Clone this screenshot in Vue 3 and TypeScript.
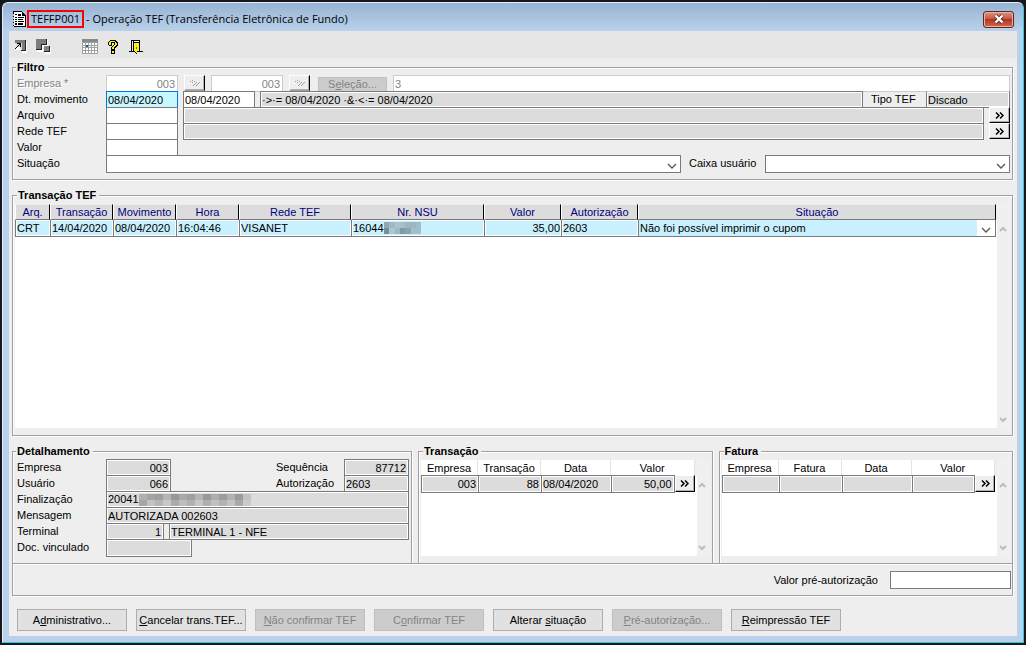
<script setup lang="ts">
import { ref } from 'vue'

interface Column {
  key: string
  label: string
}

interface Action {
  before: string
  mnemonic: string
  after: string
  disabled: boolean
}

const columns: Column[] = [
  { key: 'arq', label: 'Arq.' },
  { key: 'transacao', label: 'Transação' },
  { key: 'movimento', label: 'Movimento' },
  { key: 'hora', label: 'Hora' },
  { key: 'rede', label: 'Rede TEF' },
  { key: 'nsu', label: 'Nr. NSU' },
  { key: 'valor', label: 'Valor' },
  { key: 'autorizacao', label: 'Autorização' },
  { key: 'situacao', label: 'Situação' },
]

const miniTables = [
  {
    title: 'Transação',
    heads: ['Empresa', 'Transação', 'Data', 'Valor'],
    cells: ['003', '88', '08/04/2020', '50,00'],
  },
  {
    title: 'Fatura',
    heads: ['Empresa', 'Fatura', 'Data', 'Valor'],
    cells: ['', '', '', ''],
  },
]

const actions: Action[] = [
  { before: 'A', mnemonic: 'd', after: 'ministrativo...', disabled: false },
  { before: '', mnemonic: 'C', after: 'ancelar trans.TEF...', disabled: false },
  { before: '', mnemonic: 'N', after: 'ão confirmar TEF', disabled: true },
  { before: 'C', mnemonic: 'o', after: 'nfirmar TEF', disabled: true },
  { before: 'Alterar ', mnemonic: 's', after: 'ituação', disabled: false },
  { before: '', mnemonic: 'P', after: 'ré-autorização...', disabled: true },
  { before: '', mnemonic: 'R', after: 'eimpressão TEF', disabled: false },
]

const nsuMask = [
  ['#8fa9b3', '#9fbac4', '#a9c5cf', '#a5c0ca', '#9cb7c2', '#9ab7c3', '#a0bec9'],
  ['#75909a', '#a9c8d4', '#9ab9c5', '#819aa5', '#8aa5af', '#a3c1cc', '#a1bfca'],
]
const finalMask = [
  ['#b0b0b0', '#a4a4a4', '#9f9f9f', '#b5b5b5', '#979797', '#a9a9a9', '#a0a0a0', '#b4b4b4', '#999999', '#adadad', '#9d9d9d', '#b1b1b1', '#9b9b9b', '#c2c2c2'],
  ['#a6a6a6', '#c2c2c2', '#b5b5b5', '#c7c7c7', '#ababab', '#bdbdbd', '#b1b1b1', '#c5c5c5', '#afafaf', '#c0c0c0', '#b3b3b3', '#c4c4c4', '#a9a9a9', '#cacaca'],
]

const dateFrom = ref('08/04/2020')
const dateTo = ref('08/04/2020')
const arquivo = ref('')
const rede = ref('')
const valor = ref('')
const preAuth = ref('')
</script>

<template>
  <div class="desktop">
    <main class="window">
      <header class="titlebar">
        <svg class="doc" width="13" height="16" viewBox="0 0 13 16" shape-rendering="crispEdges">
          <path d="M1 1h8l3 3v11H1z" fill="#fff" />
          <path d="M0 0h9v1H1v2H0zM9 1h1v1h1v1h1v1h1v12H1v-1h11V5H9V1M0 5h1v1H0zM0 8h1v1H0zM0 11h1v1H0zM0 14h1v1H0zM2 3h2v1H2zM5 3h3v2H5zM2 6h2v1H2zM5 6h6v1H5zM2 8h2v1H2zM5 8h5v1H5zM2 10h2v1H2zM5 10h6v1H5zM2 12h2v2H2zM5 12h5v2H5z" fill="#000" />
        </svg>
        <h1><span class="code">TEFFP001</span><span>- Operação TEF (Transferência Eletrônica de Fundo)</span></h1>
        <button class="close" type="button" aria-label="Fechar">
          <svg width="12" height="10" viewBox="0 0 12 10">
            <path d="M2.5 1.5l7 7M9.5 1.5l-7 7" stroke="#5c2a25" stroke-width="4" />
            <path d="M2.5 1.5l7 7M9.5 1.5l-7 7" stroke="#fff" stroke-width="2.4" />
          </svg>
        </button>
      </header>

      <div class="body">
        <nav class="toolbar">
          <button type="button" aria-label="Abrir">
            <svg width="16" height="16" viewBox="0 0 16 16" shape-rendering="crispEdges">
              <path d="M3 3h11v11H9v-3H3z" fill="#fff" />
              <path d="M2 1h10v10H9V4H2z" fill="#7c7c7c" />
              <path d="M12 1h1v11H8v-1h4z" fill="#222" />
              <path d="M3 4h6v6H7V8H3z" fill="#d4d4d4" />
              <path d="M4 4h4v4H7V6H6v1H5v1H4v1H3v1H2V9h1V8h1V7h1V6h1V5H4z" fill="#000" />
            </svg>
          </button>
          <button type="button" aria-label="Organizar">
            <svg width="16" height="16" viewBox="0 0 16 16" shape-rendering="crispEdges">
              <path d="M1 1h11v7H7v5H1zM9 9h6v6H9z" fill="#fff" />
              <path d="M0 0h10v5H5v5H0z" fill="#7c7c7c" />
              <path d="M10 0h1v6H6v5H0v-1h5V5h5z" fill="#222" />
              <path d="M8 7h6v6H8z" fill="#222" />
              <path d="M8 7h5v5H8z" fill="#848484" />
            </svg>
          </button>
          <button class="apart" type="button" aria-label="Calendário">
            <svg width="16" height="16" viewBox="0 0 16 16" shape-rendering="crispEdges">
              <path d="M0 0h16v15H0z" fill="#a0a0a0" />
              <path d="M0 0h16v3H0z" fill="#888" />
              <path d="M1 4h2v2H1zM4 4h2v2H4zM7 4h2v2H7zM10 4h2v2h-2zM13 4h2v2h-2zM1 7h2v1H1zM7 7h2v1H7zM10 7h2v1h-2zM13 7h2v1h-2zM1 9h2v2H1zM4 9h2v2H4zM7 9h2v2H7zM10 9h2v2h-2zM13 9h2v2h-2zM1 12h2v2H1zM4 12h2v2H4zM7 12h2v2H7zM10 12h2v2h-2zM13 12h2v2h-2z" fill="#fff" />
              <path d="M4 6h2v2H4z" fill="#0a5f9e" />
            </svg>
          </button>
          <button type="button" aria-label="Ajuda">
            <svg width="16" height="16" viewBox="0 0 16 16" shape-rendering="crispEdges">
              <path d="M5 1h6v1h1v1h1v4h-1v1h-1v1h-1v2H6V8h1V7h1V6h1V4H7v3H4V6H3V3h1V2h1zM6 11h4v4H6z" fill="#000" />
              <path d="M5 2h5v1h1v1h1v2h-1v1h-1v1H9v2H7V8h1V7h1V6h1V3H6v3H4V3h1zM7 12h2v2H7z" fill="#ffee1c" />
            </svg>
          </button>
          <button type="button" aria-label="Sair">
            <svg width="16" height="16" viewBox="0 0 16 16" shape-rendering="crispEdges">
              <path d="M3 1h9v11h3v1H9V2H4v10h2v1H1v-1h2z" fill="#000" />
              <path d="M5 2h6v1H5z" fill="#fff" />
              <path d="M5 2h1v1h6v10H9v2H8v-1H7v-1H5z" fill="#000" />
              <path d="M6 4h5v8H9v2H8v-1H7v-1H6z" fill="#ffee1c" />
              <path d="M8 8h1v2H8z" fill="#6b6400" />
            </svg>
          </button>
        </nav>

        <fieldset class="group">
          <legend>Filtro</legend>
          <div class="row muted">
            <label class="name" for="emp-from">Empresa *</label>
            <input id="emp-from" class="field short num off" value="003" disabled />
            <button class="mini faded" type="button" disabled aria-label="Buscar empresa inicial">
              <svg width="14" height="10" viewBox="0 0 14 10" shape-rendering="crispEdges"><path d="M2 3h1v1H2zM4 2h1v1H4zM6 3h1v1H6zM4 4h1v1H4zM5 7h1v1H5zM6 6h1v1H6zM7 5h1v1H7zM8 4h1v1H8zM8 7h1v1H8zM9 6h1v1H9zM10 5h1v1h-1zM11 4h1v1h-1z" fill="#a0a0a0" /></svg>
            </button>
            <input class="field short num off" value="003" disabled aria-label="Empresa final" />
            <button class="mini faded" type="button" disabled aria-label="Buscar empresa final">
              <svg width="14" height="10" viewBox="0 0 14 10" shape-rendering="crispEdges"><path d="M2 3h1v1H2zM4 2h1v1H4zM6 3h1v1H6zM4 4h1v1H4zM5 7h1v1H5zM6 6h1v1H6zM7 5h1v1H7zM8 4h1v1H8zM8 7h1v1H8zM9 6h1v1H9zM10 5h1v1h-1zM11 4h1v1h-1z" fill="#a0a0a0" /></svg>
            </button>
            <button class="select-btn" type="button" disabled>S<u>e</u>leção...</button>
            <input class="field grow off" value="3" disabled aria-label="Seleção" />
          </div>
          <div class="row">
            <label class="name" for="dt">Dt. movimento</label>
            <input id="dt" v-model="dateFrom" class="field short current" />
            <input v-model="dateTo" class="field short" aria-label="Data final" />
            <div class="tail">
              <input class="field ro grow" value="·>·= 08/04/2020 ·&·<·= 08/04/2020" readonly aria-label="Expressão" />
              <label class="tipo" for="tipo">Tipo TEF</label>
              <input id="tipo" class="field ro discado" value="Discado" readonly />
            </div>
          </div>
          <div class="row">
            <label class="name" for="arq">Arquivo</label>
            <input id="arq" v-model="arquivo" class="field short" />
            <input class="field ro grow" readonly aria-label="Descrição do arquivo" />
            <button class="mini" type="button" aria-label="Buscar arquivo">
              <svg width="9" height="7" viewBox="0 0 9 7"><path d="M1 .5l3 3-3 3M5 .5l3 3-3 3" fill="none" stroke="#000" stroke-width="1.5" /></svg>
            </button>
          </div>
          <div class="row">
            <label class="name" for="rede">Rede TEF</label>
            <input id="rede" v-model="rede" class="field short" />
            <input class="field ro grow" readonly aria-label="Descrição da rede" />
            <button class="mini" type="button" aria-label="Buscar rede">
              <svg width="9" height="7" viewBox="0 0 9 7"><path d="M1 .5l3 3-3 3M5 .5l3 3-3 3" fill="none" stroke="#000" stroke-width="1.5" /></svg>
            </button>
          </div>
          <div class="row">
            <label class="name" for="valor">Valor</label>
            <input id="valor" v-model="valor" class="field short last" />
          </div>
          <div class="row">
            <label class="name" for="sit">Situação</label>
            <span class="combo wide">
              <select id="sit"><option></option></select>
              <svg width="10" height="6" viewBox="0 0 10 6"><path d="M1 1l4 4 4-4" fill="none" stroke="#555" stroke-width="1.3" /></svg>
            </span>
            <label class="caixa" for="caixa">Caixa usuário</label>
            <span class="combo">
              <select id="caixa"><option></option></select>
              <svg width="10" height="6" viewBox="0 0 10 6"><path d="M1 1l4 4 4-4" fill="none" stroke="#555" stroke-width="1.3" /></svg>
            </span>
          </div>
        </fieldset>

        <fieldset class="group list">
          <legend>Transação TEF</legend>
          <div class="pane">
            <div class="sheet">
              <table class="main">
                <colgroup>
                  <col v-for="c in columns" :key="c.key" :class="'c-' + c.key" />
                </colgroup>
                <thead>
                  <tr><th v-for="c in columns" :key="c.key" scope="col">{{ c.label }}</th></tr>
                </thead>
                <tbody>
                  <tr>
                    <td>CRT</td>
                    <td>14/04/2020</td>
                    <td>08/04/2020</td>
                    <td>16:04:46</td>
                    <td>VISANET</td>
                    <td>
                      <span class="masked">16044<svg width="37" height="12" viewBox="0 0 37 12" shape-rendering="crispEdges">
                        <template v-for="(line, y) in nsuMask" :key="y">
                          <rect v-for="(c, x) in line" :key="x" :x="x * 5.3" :y="y * 6" width="5.3" height="6" :fill="c" />
                        </template>
                      </svg></span>
                    </td>
                    <td class="num">35,00</td>
                    <td>2603</td>
                    <td class="pick">
                      <span class="combo cell">
                        <select aria-label="Situação da transação"><option>Não foi possível imprimir o cupom</option></select>
                        <svg width="10" height="6" viewBox="0 0 10 6"><path d="M1 1l4 4 4-4" fill="none" stroke="#555" stroke-width="1.3" /></svg>
                      </span>
                    </td>
                  </tr>
                </tbody>
              </table>
            </div>
            <div class="scroll">
              <svg width="8" height="6" viewBox="0 0 8 6"><path d="M1 5l3-3 3 3" fill="none" stroke="#bdbdbd" stroke-width="2" /></svg>
              <svg width="8" height="6" viewBox="0 0 8 6"><path d="M1 1l3 3 3-3" fill="none" stroke="#bdbdbd" stroke-width="2" /></svg>
            </div>
          </div>
        </fieldset>

        <section class="details">
          <div class="trio">
            <fieldset class="group open">
              <legend>Detalhamento</legend>
              <div class="row">
                <label class="name" for="d-emp">Empresa</label>
                <input id="d-emp" class="field ro w65 num" value="003" readonly />
                <label class="second" for="d-seq">Sequência</label>
                <input id="d-seq" class="field ro w65 num" value="87712" readonly />
              </div>
              <div class="row">
                <label class="name" for="d-usr">Usuário</label>
                <input id="d-usr" class="field ro w65 num" value="066" readonly />
                <label class="second" for="d-aut">Autorização</label>
                <input id="d-aut" class="field ro w65" value="2603" readonly />
              </div>
              <div class="row">
                <span class="name">Finalização</span>
                <output class="field ro grow masked" aria-label="Finalização">20041<svg width="112" height="12" viewBox="0 0 112 12" shape-rendering="crispEdges">
                  <template v-for="(line, y) in finalMask" :key="y">
                    <rect v-for="(c, x) in line" :key="x" :x="x * 8" :y="y * 6" width="8" height="6" :fill="c" />
                  </template>
                </svg></output>
              </div>
              <div class="row">
                <label class="name" for="d-msg">Mensagem</label>
                <input id="d-msg" class="field ro grow" value="AUTORIZADA 002603" readonly />
              </div>
              <div class="row">
                <label class="name" for="d-ter">Terminal</label>
                <input id="d-ter" class="field ro w58 num" value="1" readonly />
                <input class="field ro grow" value="TERMINAL 1 - NFE" readonly aria-label="Nome do terminal" />
              </div>
              <div class="row">
                <label class="name" for="d-doc">Doc. vinculado</label>
                <input id="d-doc" class="field ro w86 last" readonly />
              </div>
            </fieldset>

            <fieldset v-for="t in miniTables" :key="t.title" class="group open list">
              <legend>{{ t.title }}</legend>
              <div class="pane">
                <div class="sheet">
                  <table class="small">
                    <colgroup>
                      <col class="m1" /><col class="m2" /><col class="m3" /><col /><col class="m5" />
                    </colgroup>
                    <thead>
                      <tr><th v-for="h in t.heads" :key="h" scope="col" :colspan="h === 'Valor' ? 2 : 1">{{ h }}</th></tr>
                    </thead>
                    <tbody>
                      <tr>
                        <td v-for="(c, i) in t.cells" :key="i" :class="{ num: i !== 2 }">{{ c }}</td>
                        <td class="act">
                          <button class="mini" type="button" aria-label="Detalhar">
                            <svg width="9" height="7" viewBox="0 0 9 7"><path d="M1 .5l3 3-3 3M5 .5l3 3-3 3" fill="none" stroke="#000" stroke-width="1.5" /></svg>
                          </button>
                        </td>
                      </tr>
                    </tbody>
                  </table>
                </div>
                <div class="scroll">
                  <svg width="8" height="6" viewBox="0 0 8 6"><path d="M1 5l3-3 3 3" fill="none" stroke="#bdbdbd" stroke-width="2" /></svg>
                  <svg width="8" height="6" viewBox="0 0 8 6"><path d="M1 1l3 3 3-3" fill="none" stroke="#bdbdbd" stroke-width="2" /></svg>
                </div>
              </div>
            </fieldset>
          </div>
          <div class="preauth">
            <label for="pre">Valor pré-autorização</label>
            <input id="pre" v-model="preAuth" class="field" />
          </div>
        </section>

        <footer class="actions">
          <button v-for="a in actions" :key="a.after" type="button" :disabled="a.disabled">{{ a.before }}<u>{{ a.mnemonic }}</u>{{ a.after }}</button>
        </footer>
      </div>
    </main>
  </div>
</template>

<style>
body {
  margin: 0;
  background: #111;
}
</style>

<style scoped>
* {
  box-sizing: border-box;
}
.desktop {
  display: flex;
  min-height: 100vh;
  padding: 2px;
  background: #16181b;
  font: 11px/14px "Liberation Sans", Arial, sans-serif;
  color: #000;
}
.window {
  flex: 1;
  min-width: 0;
  display: flex;
  flex-direction: column;
  padding: 0 6px 6px;
  border: 1px solid #2fc5e4;
  border-top-color: #e4eef8;
  border-left-color: #e4eef8;
  border-radius: 6px 6px 0 0;
  background: linear-gradient(#98b4d4, #b9d1ea 28px);
}
input,
button,
select {
  font: inherit;
  color: inherit;
  margin: 0;
  border-radius: 0;
}
svg {
  display: block;
  flex: none;
}

.titlebar {
  display: flex;
  align-items: center;
  height: 28px;
  padding: 4px 4px 0;
}
.titlebar h1 {
  flex: 1;
  display: flex;
  align-items: center;
  margin: 0;
  font: 11px/14px "Open Sans", "Noto Sans", sans-serif;
  white-space: nowrap;
}
.doc {
  margin-right: 1px;
}
.code {
  border: 2px solid #f00;
  padding: 0 2px;
  margin-right: 2px;
}
.close {
  display: flex;
  align-items: center;
  justify-content: center;
  width: 31px;
  height: 17px;
  margin-right: -1px;
  padding: 0;
  border: 1px solid #5a2822;
  border-radius: 3px;
  box-shadow: inset 0 0 0 1px #e9b0a4;
  background: linear-gradient(#dc9484, #c4523f 50%, #b5331d 50%, #cf6a4c);
}

.body {
  flex: 1;
  display: flex;
  flex-direction: column;
  padding: 0 4px 5px 3px;
  background: #eee;
}
.toolbar {
  display: flex;
  align-items: center;
  gap: 7px;
  height: 29px;
  margin: 0 -4px 0 -3px;
  padding: 4px 4px 0;
  border-bottom: 2px solid #eee;
  background: #e6e6e6;
}
.toolbar button {
  padding: 0;
  border: 0;
  background: none;
}
.toolbar .apart {
  margin-left: 23px;
}

.group {
  min-width: 0;
  margin: 0;
  padding: 1px 2px 8px 4px;
  border: 1px solid #a0a0a0;
  box-shadow: inset 1px 1px 0 #fff, 1px 1px 0 #fff;
}
legend {
  padding: 0 3px 0 1px;
  margin-left: -1px;
  background: #eee;
  font-weight: bold;
  line-height: 14px;
}
.list legend {
  margin-left: 2px;
}
.row {
  display: flex;
  gap: 5px;
  height: 16px;
}
.name {
  width: 84px;
  line-height: 16px;
}
.muted {
  color: #838383;
}
.muted .name {
  text-shadow: 1px 1px 0 #fff;
}
.field {
  min-width: 0;
  height: 17px;
  padding: 0 2px 0 1px;
  border: 1px solid #7a7a7a;
  background: #fff;
  line-height: 15px;
  outline: none;
}
.short {
  width: 72px;
}
.last {
  height: 18px;
}
.w58 {
  width: 58px;
}
.w65 {
  width: 65px;
}
.w86 {
  width: 86px;
}
.grow {
  flex: 1;
}
.num {
  text-align: right;
}
.off {
  border-color: #ccc;
}
.ro {
  background: #dcdcdc;
  box-shadow: inset 0 0 0 1px #fff;
}
.current {
  border-color: #0078d7;
  background: #c8f7ff;
}
.tail {
  flex: 1;
  display: flex;
}
.tipo {
  width: 63px;
  padding-left: 8px;
  line-height: 16px;
}
.discado {
  width: 84px;
  border-top-color: #ccc;
}
.mini {
  display: flex;
  align-items: center;
  justify-content: center;
  width: 21px;
  height: 16px;
  padding: 0;
  border: 1px solid #fff;
  border-right-color: #000;
  border-bottom-color: #000;
  box-shadow: inset -1px -1px 0 #b0b0b0;
  background: #eee;
}
.faded {
  margin: 0 1px;
  border-bottom-color: #a0a0a0;
}
.select-btn {
  width: 69px;
  height: 15px;
  margin: 2px 1px 0 2px;
  padding: 0;
  border: 1px solid #bfbfbf;
  background: #ccc;
  line-height: 13px;
}
.combo {
  flex: 1;
  display: grid;
  align-items: center;
  height: 18px;
}
.combo select,
.combo svg {
  grid-area: 1 / 1;
}
.combo select {
  width: 100%;
  height: 18px;
  padding: 0 2px;
  border: 1px solid #7a7a7a;
  background: #fff;
  appearance: none;
}
.combo svg {
  justify-self: end;
  margin: 3px 4px 0 0;
  pointer-events: none;
}
.wide {
  flex: 0 1 575px;
}
.caixa {
  width: 74px;
  padding-left: 3px;
  line-height: 16px;
  white-space: nowrap;
}

.list {
  display: flex;
  flex-direction: column;
  padding: 2px 2px 7px;
}
.pane {
  flex: 1;
  display: flex;
}
.sheet {
  flex: 1;
  min-width: 0;
  padding-right: 1px;
  background: linear-gradient(#eee 16px, #fff 16px);
}
.open .sheet {
  padding-right: 2px;
}
.scroll {
  display: flex;
  flex-direction: column;
  justify-content: space-between;
  align-items: center;
  width: 13px;
  padding: 22px 2px 5px 0;
  background: #f0f0f0;
}
table {
  width: 100%;
  table-layout: fixed;
  border-collapse: separate;
  border-spacing: 0;
}
th,
td {
  padding: 0;
  font-weight: normal;
  white-space: nowrap;
  overflow: hidden;
}
.main th {
  height: 16px;
  border: 1px solid;
  border-color: #eee #000 #7a7a7a #fff;
  background: #dcdcdc;
  color: #000080;
  line-height: 14px;
}
.main td {
  height: 17px;
  padding: 0 1px;
  border: solid #7a7a7a;
  border-width: 0 0 1px 1px;
  box-shadow: inset 0 0 0 1px #fff;
  background: #c8f0ff;
  line-height: 16px;
}
.main .pick {
  padding: 0;
  border-right-width: 1px;
}
.c-arq {
  width: 35px;
}
.c-transacao,
.c-movimento,
.c-hora {
  width: 63px;
}
.c-rede {
  width: 112px;
}
.c-nsu {
  width: 133px;
}
.c-valor,
.c-autorizacao {
  width: 77px;
}
.cell,
.cell select {
  height: 16px;
}
.cell {
  background: #fff;
}
.cell select {
  width: calc(100% - 18px);
  padding: 0 1px;
  border: 0;
  background: #c8f0ff;
}
.masked {
  display: flex;
  align-items: center;
}

.details {
  margin-top: 8px;
}
.list:not(.open) {
  flex: 1;
  margin-top: 8px;
}
.trio {
  display: grid;
  grid-template-columns: 400px 1fr 1fr;
  gap: 6px;
}
.open {
  border-bottom: 0;
  box-shadow: inset 1px 1px 0 #fff, 1px 0 0 #fff;
}
.second {
  width: 63px;
  margin-left: auto;
  line-height: 16px;
}
.small th {
  height: 15px;
  border-right: 1px solid #e4e4e4;
  background: #fff;
}
.small tbody td {
  height: 18px;
  padding: 0 2px 0 1px;
  border: solid #7a7a7a;
  border-width: 1px 0 1px 1px;
  box-shadow: inset 0 0 0 1px #fff;
  background: #dcdcdc;
}
.small tbody .act {
  padding: 0;
  border-width: 0 0 0 1px;
  background: #fff;
  vertical-align: top;
}
.act .mini {
  width: 20px;
  height: 17px;
}
.m1 {
  width: 57px;
}
.m2 {
  width: 63px;
}
.m3 {
  width: 70px;
}
.m5 {
  width: 21px;
}
.preauth {
  display: flex;
  align-items: center;
  justify-content: flex-end;
  gap: 12px;
  height: 33px;
  padding-right: 1px;
  border: 1px solid #a0a0a0;
  box-shadow: inset 1px 1px 0 #fff, 1px 1px 0 #fff;
}
.preauth .field {
  width: 121px;
  height: 18px;
}
.actions {
  display: flex;
  gap: 9px;
  margin-top: 13px;
  padding-left: 5px;
}
.actions button {
  width: 110px;
  height: 22px;
  padding: 0;
  border: 1px solid #adadad;
  background: #e1e1e1;
  white-space: nowrap;
}
.actions button:disabled {
  border-color: #bfbfbf;
  background: #ccc;
  color: #838383;
}
u {
  text-underline-offset: 1px;
}
</style>
